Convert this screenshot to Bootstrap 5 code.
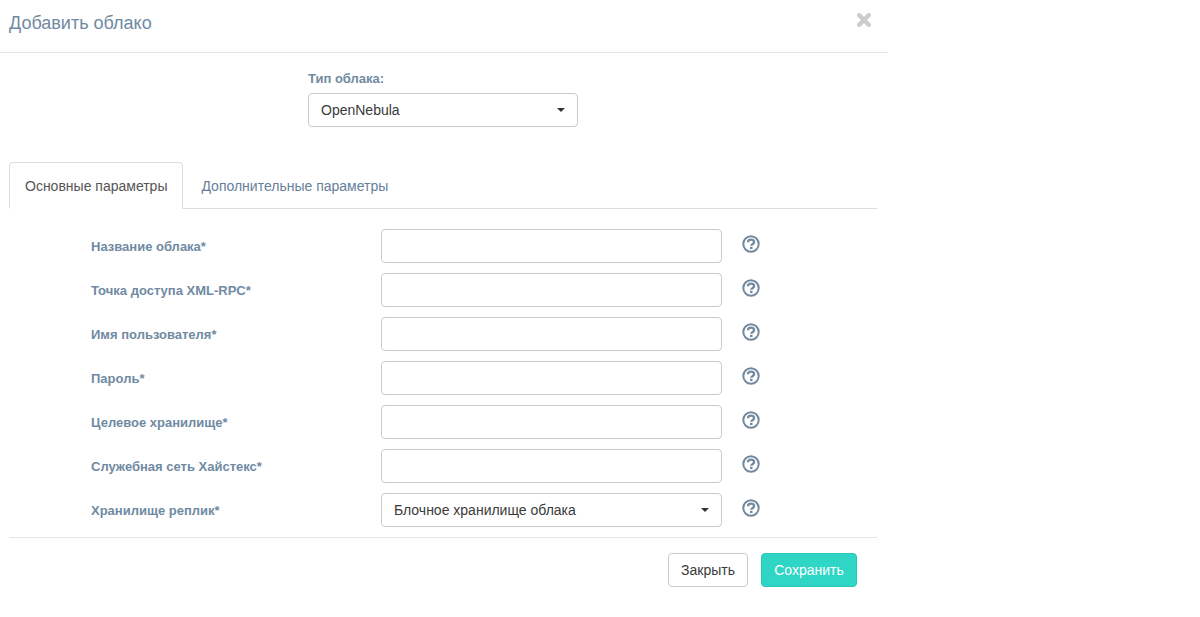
<!DOCTYPE html>
<html lang="ru">
<head>
<meta charset="utf-8">
<title>Добавить облако</title>
<link rel="stylesheet" href="https://cdn.jsdelivr.net/npm/bootstrap@5.3.0/dist/css/bootstrap.min.css">
<style>
html,body{background:#fff;height:100%;overflow:hidden}
body{font-family:"Liberation Sans",Arial,sans-serif;font-size:14px;color:#333}
.dlg{width:888px}
.dlg-head{height:53px;border-bottom:1px solid #e5e5e5;padding:0 17px 0 9px}
.dlg-title{font-size:18px;font-weight:400;color:#708aa3;margin:0;line-height:20px;padding-top:13px}
.dlg-close{background:none;border:0;padding:0;width:14px;height:14px;margin-top:13px;display:block;line-height:0}
.type-wrap{padding:18px 0 0 308px;box-sizing:content-box;width:270px}
.fld-label{font-size:13px;font-weight:700;color:#708aa3;margin:0;line-height:16px;display:block}
.type-wrap .fld-label{margin-bottom:6px}
.pick{height:34px;border:1px solid #ccc;border-radius:4px;background:#fff;color:#3a3a3a;font-size:14px;line-height:20px;padding:6px 12px;text-align:left;width:100%}
.pick.dropdown-toggle::after{border-top:4px solid #333;border-right:4px solid transparent;border-left:4px solid transparent;border-bottom:0;margin:0}
.pick:hover,.pick:active{background:#fff;border-color:#ccc;color:#333}
.tabs-wrap{margin:35px 11px 0 9px}
.tabs-wrap .nav-tabs{border-bottom:1px solid #ddd;height:47px}
.tabs-wrap .nav-item+.nav-item{margin-left:2px}
.tabs-wrap .nav-link{height:47px;padding:13px 15px 0;font-size:14px;line-height:20px;color:#66809b;border-radius:4px 4px 0 0}
.tabs-wrap .nav-link.active{color:#555;border-color:#ddd #ddd #fff}
.form-area{margin:20px 11px 0 9px;border-bottom:1px solid #e5e5e5;padding-bottom:10px}
.form-line{height:34px;margin-bottom:10px;padding-left:82px}
.form-line:last-child{margin-bottom:0}
.form-line .fld-label{width:290px;flex:none;line-height:34px;padding-top:1px}
.inp{width:341px;flex:none;height:34px;border:1px solid #ccc;border-radius:4px;padding:6px 12px;box-shadow:none}
.pick-long{width:341px;flex:none}
.hint{display:block;margin:-4px 0 0 20px;width:18px;height:18px;flex:none}
.dlg-foot{padding:15px 31px 0 0;width:888px}
.btn-close-x{height:34px;width:80px;border:1px solid #ccc;background:#fff;color:#3a3a3a;font-size:14px;padding:0;border-radius:4px}
.btn-save{height:34px;width:96px;border:1px solid #2ac7b6;background:#2fd6c5;color:#fff;font-size:14px;padding:0;border-radius:4px;margin-left:13px}
</style>
</head>
<body>
<svg width="0" height="0" class="d-block" aria-hidden="true">
  <symbol id="q" viewBox="0 0 18 18"><circle cx="9" cy="9" r="7.7" fill="none" stroke="#73899f" stroke-width="2"/><path d="M6 7.2C6.1 5.3 7.4 4.6 9 4.6c1.8 0 3.1 1 3.1 2.5 0 2.2-2.8 2.1-2.8 3.7" fill="none" stroke="#73899f" stroke-width="2.4"/><rect x="8" y="11.8" width="2.5" height="2.3" fill="#73899f"/></symbol>
</svg>
<div class="dlg">
  <div class="dlg-head d-flex justify-content-between align-items-start">
    <h4 class="dlg-title">Добавить облако</h4>
    <button type="button" class="dlg-close" aria-label="Закрыть">
      <svg width="14" height="14" viewBox="0 0 14 14"><path d="M2.2 2.2 11.8 11.8M11.8 2.2 2.2 11.8" stroke="#ccc" stroke-width="4.4" fill="none" stroke-linecap="round"/></svg>
    </button>
  </div>
  <div class="type-wrap">
    <label class="fld-label">Тип облака:</label>
    <button type="button" class="pick btn dropdown-toggle d-flex justify-content-between align-items-center">OpenNebula</button>
  </div>
  <div class="tabs-wrap">
    <ul class="nav nav-tabs">
      <li class="nav-item"><a class="nav-link active" href="#">Основные параметры</a></li>
      <li class="nav-item"><a class="nav-link" href="#">Дополнительные параметры</a></li>
    </ul>
  </div>
  <div class="form-area">
    <div class="form-line d-flex align-items-center"><label class="fld-label">Название облака*</label><input class="form-control inp" type="text"><svg class="hint"><use href="#q"/></svg></div>
    <div class="form-line d-flex align-items-center"><label class="fld-label">Точка доступа XML-RPC*</label><input class="form-control inp" type="text"><svg class="hint"><use href="#q"/></svg></div>
    <div class="form-line d-flex align-items-center"><label class="fld-label">Имя пользователя*</label><input class="form-control inp" type="text"><svg class="hint"><use href="#q"/></svg></div>
    <div class="form-line d-flex align-items-center"><label class="fld-label">Пароль*</label><input class="form-control inp" type="text"><svg class="hint"><use href="#q"/></svg></div>
    <div class="form-line d-flex align-items-center"><label class="fld-label">Целевое хранилище*</label><input class="form-control inp" type="text"><svg class="hint"><use href="#q"/></svg></div>
    <div class="form-line d-flex align-items-center"><label class="fld-label">Служебная сеть Хайстекс*</label><input class="form-control inp" type="text"><svg class="hint"><use href="#q"/></svg></div>
    <div class="form-line d-flex align-items-center"><label class="fld-label">Хранилище реплик*</label><div class="pick-long"><button type="button" class="pick btn dropdown-toggle d-flex justify-content-between align-items-center">Блочное хранилище облака</button></div><svg class="hint"><use href="#q"/></svg></div>
  </div>
  <div class="dlg-foot d-flex justify-content-end">
    <button type="button" class="btn btn-close-x">Закрыть</button>
    <button type="button" class="btn btn-save">Сохранить</button>
  </div>
</div>
<script src="https://cdn.jsdelivr.net/npm/bootstrap@5.3.0/dist/js/bootstrap.bundle.min.js"></script>
</body>
</html>
